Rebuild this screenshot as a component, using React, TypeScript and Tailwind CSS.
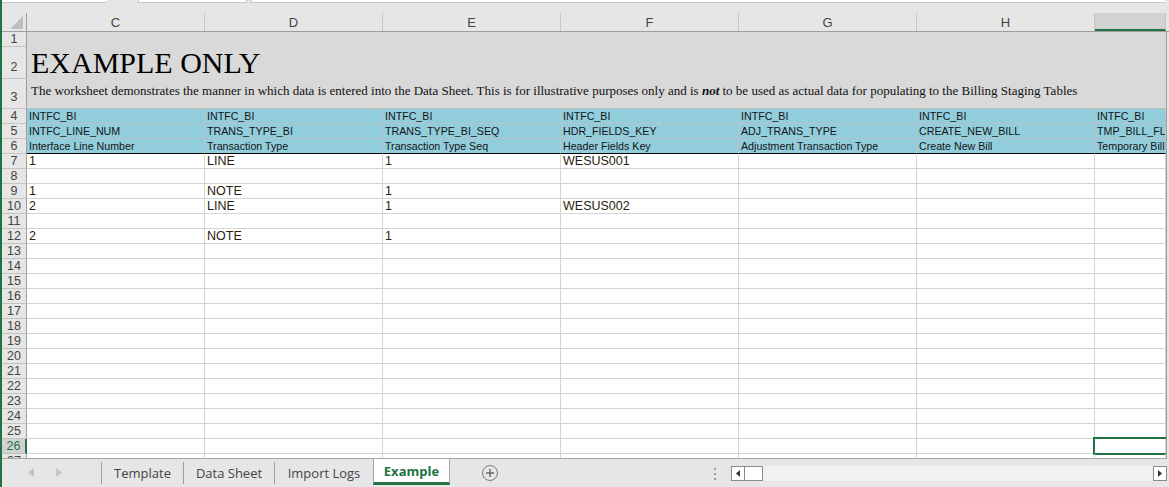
import React from "react";

const letters = ["C", "D", "E", "F", "G", "H", ""];
const colW = ["w-[178px]", "w-[178px]", "w-[178px]", "w-[178px]", "w-[178px]", "w-[178px]", "w-[71px]"];

const headerRows: string[][] = [
  ["INTFC_BI", "INTFC_BI", "INTFC_BI", "INTFC_BI", "INTFC_BI", "INTFC_BI", "INTFC_BI"],
  ["INTFC_LINE_NUM", "TRANS_TYPE_BI", "TRANS_TYPE_BI_SEQ", "HDR_FIELDS_KEY", "ADJ_TRANS_TYPE", "CREATE_NEW_BILL", "TMP_BILL_FLG"],
  ["Interface Line Number", "Transaction Type", "Transaction Type Seq", "Header Fields Key", "Adjustment Transaction Type", "Create New Bill", "Temporary Bill Flag"],
];

const dataRows: Record<number, string[]> = {
  7: ["1", "LINE", "1", "WESUS001"],
  9: ["1", "NOTE", "1"],
  10: ["2", "LINE", "1", "WESUS002"],
  12: ["2", "NOTE", "1"],
};

function RowHead({ n, tall, active }: { n: number; tall?: string; active?: boolean }) {
  return (
    <div
      className={`w-[25px] shrink-0 border-b border-r text-center text-[12.5px] ${
        active
          ? "bg-[#d2d2d2] text-[#217346] border-r-2 border-r-[#217346] border-b-[#bdbdbd]"
          : "bg-[#e6e6e6] text-[#444] border-b-[#c4c4c4] border-r-[#9e9e9e]"
      } ${tall ?? "h-[15px] leading-[14px]"}`}
    >
      {n}
    </div>
  );
}

export default function App() {
  const rows: number[] = [];
  for (let i = 7; i <= 27; i++) rows.push(i);

  return (
    <div
      className="w-[1169px] h-[487px] overflow-hidden bg-[#e6e6e6] border-l-2 border-[#217346] flex flex-col"
      style={{ fontFamily: '"Liberation Sans", Arial, sans-serif' }}
    >
      {/* top strip */}
      <div className="h-[13px] shrink-0 flex items-start">
        <div className="w-[105px] h-[3px] bg-white border-b border-[#c6c6c6]" />
        <div className="ml-[31px] w-[109px] h-[3px] bg-white border-b border-x border-[#c6c6c6]" />
        <div className="ml-[4px] w-[914px] h-[3px] bg-white border-b border-l border-[#c6c6c6]" />
      </div>

      {/* column headers */}
      <div className="h-[19px] shrink-0 flex border-b border-[#9e9e9e]">
        <div className="w-[25px] shrink-0 border-r border-[#9e9e9e] flex items-end justify-end pr-[3px] pb-[2px]">
          <svg width="13" height="13" viewBox="0 0 13 13">
            <polygon points="13,0 13,13 0,13" fill="#bdbdbd" />
          </svg>
        </div>
        {letters.map((l, i) => (
          <div
            key={i}
            className={`${colW[i]} shrink-0 border-r text-center text-[13px] leading-[19px] text-[#444] ${
              i === 6 ? "bg-[#d2d2d2] border-b-2 border-b-[#217346] border-r-[#c6c6c6]" : "border-[#c6c6c6]"
            }`}
          >
            {l}
          </div>
        ))}
      </div>

      {/* grid body */}
      <div className="flex-1 overflow-hidden bg-white border-b border-[#a6a6a6] w-[1165px] border-r border-r-[#9e9e9e]">
        {/* merged rows 1-3 */}
        <div className="flex">
          <div className="flex flex-col">
            <RowHead n={1} />
            <RowHead n={2} tall="h-[32px] leading-[40px]" />
            <RowHead n={3} tall="h-[30px] leading-[36px]" />
          </div>
          <div className="flex-1 bg-[#d9d9d9] border-b border-[#bdbdbd]" style={{ fontFamily: '"Liberation Serif", "Times New Roman", serif' }}>
            <div className="h-[15px]" />
            <div className="h-[32px] leading-[32px] text-[30px] text-black pl-[4px] whitespace-nowrap">EXAMPLE ONLY</div>
            <div className="h-[29px] leading-[24px] text-[13px] text-[#111] pl-[4px] whitespace-nowrap">
              The worksheet demonstrates the manner in which data is entered into the Data Sheet. This is for illustrative
              purposes only and is <b className="italic font-bold">not</b> to be used as actual data for populating to the
              Billing Staging Tables
            </div>
          </div>
        </div>

        {/* blue header rows 4-6 */}
        {headerRows.map((r, ri) => (
          <div key={ri} className="flex">
            <RowHead n={4 + ri} />
            {r.map((t, ci) => (
              <div
                key={ci}
                className={`${colW[ci]} shrink-0 h-[15px] bg-[#92cddc] border-r border-b ${
                  ri === 2 ? "border-b-black border-r-[#b3c3c7]" : "border-[#b3c3c7]"
                } px-[2px] text-[10.67px] leading-[14px] text-[#141414] whitespace-nowrap overflow-hidden`}
              >
                {t}
              </div>
            ))}
          </div>
        ))}

        {/* data rows */}
        {rows.map((n) => {
          const d = dataRows[n] ?? [];
          return (
            <div key={n} className="flex">
              <RowHead n={n} active={n === 26} />
              {colW.map((w, ci) => (
                <div
                  key={ci}
                  className={`${w} shrink-0 h-[15px] border-r border-b border-[#d4d4d4] px-[2px] text-[12.5px] leading-[14px] text-[#2a1c0e] whitespace-nowrap relative`}
                >
                  {d[ci] ?? ""}
                  {n === 26 && ci === 6 ? (
                    <div className="absolute -left-[2px] -top-[2px] w-[80px] h-[18px] border-2 border-[#217346]" />
                  ) : null}
                </div>
              ))}
            </div>
          );
        })}
      </div>

      {/* sheet tabs bar */}
      <div className="h-[28px] shrink-0 flex items-start text-[13px] text-[#444]" style={{ fontFamily: '"Open Sans", "Noto Sans", sans-serif' }}>
        <div className="w-[99px] h-[26px] flex items-center">
          <svg className="ml-[26px]" width="6" height="9" viewBox="0 0 6 9">
            <polygon points="6,0 6,9 0,4.5" fill="#c4c4c4" />
          </svg>
          <svg className="ml-[22px]" width="6" height="9" viewBox="0 0 6 9">
            <polygon points="0,0 0,9 6,4.5" fill="#c4c4c4" />
          </svg>
        </div>
        <div className="w-[82px] h-[22px] mt-[3px] border-l border-[#9e9e9e] flex items-center justify-center leading-none">
          Template
        </div>
        <div className="w-[91px] h-[22px] mt-[3px] border-l border-[#9e9e9e] flex items-center justify-center leading-none">
          Data Sheet
        </div>
        <div className="w-[99px] h-[22px] mt-[3px] border-l border-[#9e9e9e] flex items-center justify-center leading-none">
          Import Logs
        </div>
        <div className="w-[77px] h-[26px] pt-[2px] bg-white border-x border-[#a6a6a6] border-b-[3px] border-b-[#217346] flex items-center justify-center font-bold text-[#217346] leading-none">
          Example
        </div>
        <div className="ml-[32px] mt-[6px] w-[16px] h-[16px] rounded-full border border-[#7a7a7a] flex items-center justify-center">
          <svg width="10" height="10" viewBox="0 0 10 10">
            <path d="M5 1v8M1 5h8" stroke="#6a6a6a" strokeWidth="1.4" />
          </svg>
        </div>
        <div className="ml-[216px] mt-[9px] flex flex-col gap-[3px]">
          <div className="w-[2px] h-[2px] bg-[#9a9a9a]" />
          <div className="w-[2px] h-[2px] bg-[#9a9a9a]" />
          <div className="w-[2px] h-[2px] bg-[#9a9a9a]" />
        </div>
        <div className="ml-[15px] mt-[7px] w-[436px] h-[15px] flex bg-[#f1f1f1]">
          <div className="w-[14px] h-[15px] bg-white border border-[#8a8a8a] flex items-center justify-center">
            <svg width="4" height="7" viewBox="0 0 4 7">
              <polygon points="4,0 4,7 0,3.5" fill="#333" />
            </svg>
          </div>
          <div className="w-[18px] h-[15px] bg-white border border-l-0 border-[#8a8a8a]" />
          <div className="flex-1" />
          <div className="w-[14px] h-[15px] bg-white border border-[#8a8a8a] flex items-center justify-center">
            <svg width="4" height="7" viewBox="0 0 4 7">
              <polygon points="0,0 0,7 4,3.5" fill="#333" />
            </svg>
          </div>
        </div>
      </div>
    </div>
  );
}
